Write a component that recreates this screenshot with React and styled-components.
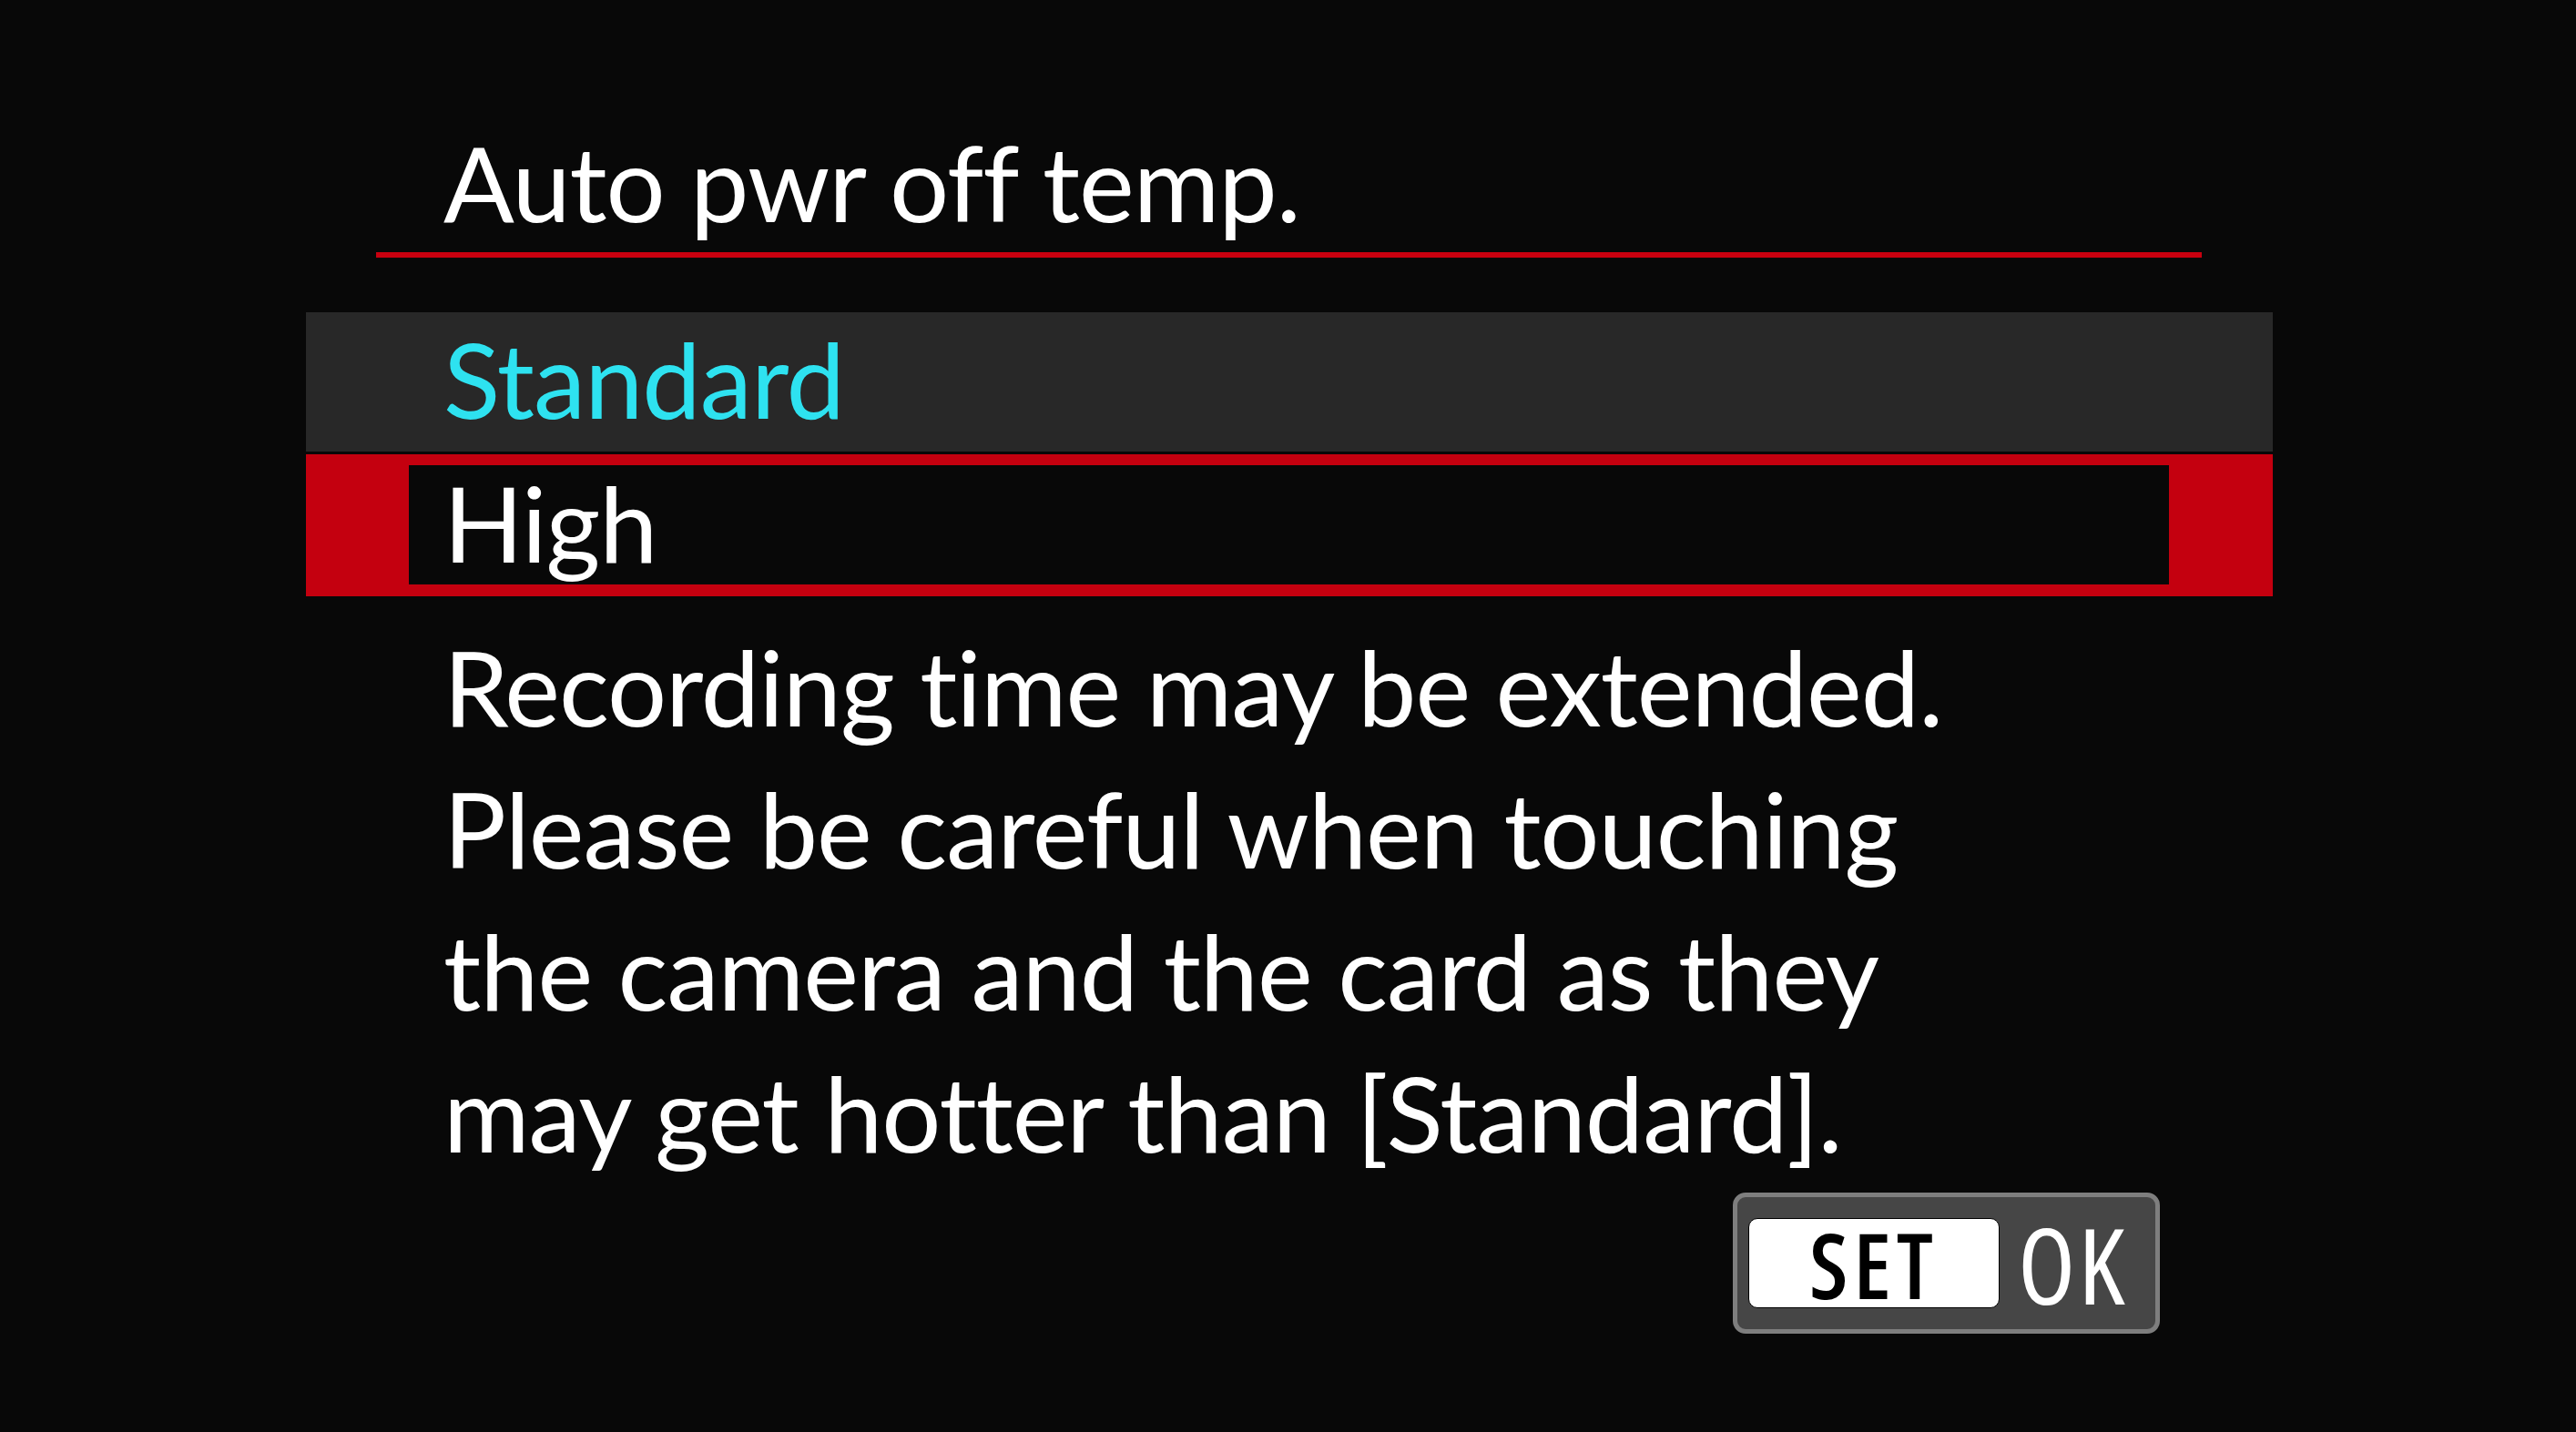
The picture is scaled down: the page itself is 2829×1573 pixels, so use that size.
import styled, { createGlobalStyle } from "styled-components";

const GlobalStyle = createGlobalStyle`
  html, body {
    margin: 0;
    padding: 0;
    background: #080808;
  }
`;

const Screen = styled.div`
  width: 2829px;
  height: 1573px;
  overflow: hidden;
  background: #080808;
  color: #ffffff;
  font-family: Lato, "Open Sans", sans-serif;
  font-size: 115px;
  font-variant-ligatures: none;
  letter-spacing: -1px;
`;

const Header = styled.h1`
  box-sizing: border-box;
  width: 2005px;
  margin: 122px 0 0 413px;
  padding-left: 74px;
  font-size: 115px;
  font-weight: 400;
  line-height: 155px;
  white-space: nowrap;
  border-bottom: 6px solid #c8000f;
`;

const OptionList = styled.div`
  display: flex;
  flex-direction: column;
  gap: 3px;
  width: 2160px;
  margin: 60px 0 0 336px;
`;

const OptionRow = styled.div`
  box-sizing: border-box;
  white-space: nowrap;
  ${(p) =>
    p.selected
      ? `
    height: 156px;
    padding: 0 0 6px 38px;
    line-height: 125px;
    color: #ffffff;
    background: #080808;
    border-style: solid;
    border-color: #c4000f;
    border-width: 12px 114px 13px 113px;
  `
      : `
    height: 153px;
    padding: 0 0 8px 151px;
    line-height: 145px;
    color: ${p.current ? "#2ee2f0" : "#ffffff"};
    background: #282828;
  `}
`;

const Message = styled.div`
  margin: 20px 0 0 487px;
  line-height: 156px;
`;

const MessageLine = styled.div`
  white-space: nowrap;
`;

const Footer = styled.div`
  display: flex;
  justify-content: flex-end;
  width: 2372px;
  margin-top: 11px;
`;

const SetButton = styled.div`
  box-sizing: border-box;
  display: flex;
  align-items: center;
  width: 469px;
  height: 155px;
  padding: 0 12px;
  background: #464646;
  border: 5px solid #7e7e7e;
  border-radius: 14px;
`;

const SetKey = styled.div`
  display: flex;
  align-items: center;
  justify-content: center;
  width: 276px;
  height: 99px;
  background: #ffffff;
  border: 1px solid #000000;
  box-sizing: border-box;
  border-radius: 10px;
  color: #000000;
  font-family: "Open Sans", sans-serif;
  font-size: 100px;
  font-weight: 600;
  font-stretch: 75%;
  letter-spacing: 6px;
  line-height: 1;
`;

const OkLabel = styled.div`
  margin-left: 20px;
  font-family: "Open Sans", sans-serif;
  font-size: 116px;
  font-stretch: 75%;
  letter-spacing: 3px;
  line-height: 1;
  color: #ffffff;
`;

const lines = [
  "Recording time may be extended.",
  "Please be careful when touching",
  "the camera and the card as they",
  "may get hotter than [Standard].",
];

export default function App() {
  return (
    <>
      <GlobalStyle />
      <Screen>
        <Header>Auto pwr off temp.</Header>
        <OptionList>
          <OptionRow current>Standard</OptionRow>
          <OptionRow selected>High</OptionRow>
        </OptionList>
        <Message>
          {lines.map((l) => (
            <MessageLine key={l}>{l}</MessageLine>
          ))}
        </Message>
        <Footer>
          <SetButton>
            <SetKey>SET</SetKey>
            <OkLabel>OK</OkLabel>
          </SetButton>
        </Footer>
      </Screen>
    </>
  );
}
